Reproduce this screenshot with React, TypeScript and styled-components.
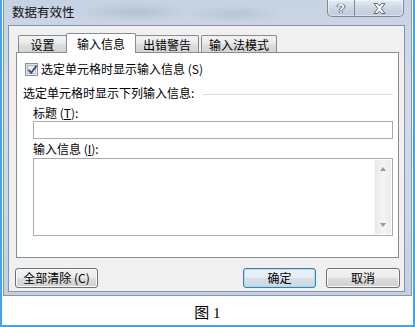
import React from "react";
import styled, { createGlobalStyle } from "styled-components";

const Global = createGlobalStyle`
  html, body { margin: 0; padding: 0; background: #fff; }
  body {
    font-family: "Noto Sans CJK SC", "Liberation Sans", sans-serif;
    font-size: 12px;
    color: #000;
  }
  * { box-sizing: border-box; }
`;

const Page = styled.div`
  width: 415px;
  height: 327px;
  border: 2px solid #4aa0ef;
  border-top: none;
  padding: 0 1px;
  background: #fff;
  display: flex;
  flex-direction: column;
`;

const Window = styled.div`
  height: 296px;
  flex: none;
  display: flex;
  flex-direction: column;
  border: 1px solid #8796aa;
  border-top: none;
  padding: 0 6px 3px 4px;
  background:
    radial-gradient(ellipse 60px 10px at 130px 12px, rgba(120, 140, 165, 0.25), transparent),
    radial-gradient(ellipse 50px 9px at 230px 14px, rgba(120, 140, 165, 0.22), transparent),
    linear-gradient(180deg, #c6d3e3 0%, #d2dce9 30%, #ccd8e7 70%, #c3d0e1 100%);
`;

const TitleBar = styled.div`
  height: 25px;
  flex: none;
  display: flex;
  align-items: flex-start;
  justify-content: space-between;
  padding-left: 4px;
`;

const TitleText = styled.span`
  font-size: 12.5px;
  line-height: 14px;
  margin-top: 5px;
  color: #111;
`;

const CaptionButtons = styled.div`
  display: flex;
  margin-right: 1px;
  height: 17px;
  border: 1px solid #7d8a9c;
  border-top: none;
  border-radius: 0 0 5px 5px;
  overflow: hidden;
  background: linear-gradient(180deg, rgba(255, 255, 255, 0.55), rgba(205, 215, 230, 0.5) 55%, rgba(185, 198, 215, 0.6));
  box-shadow: inset 0 0 0 1px rgba(255, 255, 255, 0.45);
`;

const CapBtn = styled.div<{ $w: number; $sep?: boolean }>`
  width: ${(p) => p.$w}px;
  display: flex;
  align-items: center;
  justify-content: center;
  border-right: ${(p) => (p.$sep ? "1px solid #7d8a9c" : "none")};
`;

const HelpGlyph = styled.span`
  font-family: "Liberation Sans", sans-serif;
  font-weight: bold;
  font-size: 13px;
  line-height: 13px;
  color: #fff;
  text-shadow: 0 0 1px #4b5566, 0 0 1px #4b5566, 1px 0 0 #6b7586, -1px 0 0 #6b7586;
`;

const Client = styled.div`
  flex: 1;
  display: flex;
  flex-direction: column;
  background: #f0f0f0;
  border: 1px solid #8594a8;
  padding: 7px 4px 3px 6px;
`;

const TabStrip = styled.div`
  height: 19px;
  display: flex;
  align-items: flex-end;
  padding-left: 2px;
  margin-left: 1px;
  position: relative;
  z-index: 1;
`;

const Tab = styled.div<{ $w: number; $active?: boolean; $mr?: number }>`
  width: ${(p) => p.$w}px;
  height: ${(p) => (p.$active ? 20 : 17)}px;
  margin-bottom: ${(p) => (p.$active ? -1 : 0)}px;
  margin-left: ${(p) => (p.$active ? -1 : 0)}px;
  margin-right: ${(p) => (p.$mr ?? 0)}px;
  display: flex;
  align-items: center;
  justify-content: center;
  padding-top: ${(p) => (p.$active ? 0 : 1)}px;
  border: 1px solid #898c95;
  border-bottom: none;
  border-radius: 2px 2px 0 0;
  line-height: 14px;
  background: ${(p) =>
    p.$active
      ? "#fff"
      : "linear-gradient(180deg, #f3f3f3 0%, #ebebeb 45%, #dedede 55%, #d3d3d3 100%)"};
`;

const Panel = styled.div`
  height: 206px;
  flex: none;
  margin-left: 1px;
  margin-right: 1px;
  background: #fff;
  border: 1px solid #898c95;
  display: flex;
  flex-direction: column;
  padding: 0 5px 0 6px;
`;

const CheckRow = styled.label`
  margin-top: 9px;
  padding-left: 2px;
  height: 14px;
  display: flex;
  align-items: center;
  line-height: 14px;
`;

const CheckBox = styled.span`
  width: 13px;
  height: 13px;
  flex: none;
  border: 1px solid #8e8f8f;
  background: linear-gradient(135deg, #dcdcdc, #f6f6f6);
  padding: 1px;
  display: flex;
  align-items: center;
  justify-content: center;
  margin-right: 3px;
`;

const CheckInner = styled.span`
  width: 9px;
  height: 9px;
  background: linear-gradient(135deg, #e2e2e2, #fbfbfb);
  border: 1px solid #b9b9b9;
  position: relative;
  overflow: visible;
`;

const CheckMark = styled.svg`
  position: absolute;
  left: -1px;
  top: -2px;
`;

const GroupHeader = styled.div`
  margin-top: 10px;
  height: 14px;
  line-height: 14px;
  display: flex;
  align-items: center;
`;

const GroupLine = styled.div`
  flex: 1;
  height: 1px;
  background: #dcdcdc;
  margin-left: 9px;
  margin-top: 2px;
`;

const Fields = styled.div`
  padding-left: 10px;
  display: flex;
  flex-direction: column;
`;

const FieldLabel = styled.div<{ $mt: number }>`
  margin-top: ${(p) => p.$mt}px;
  height: 14px;
  line-height: 14px;
`;

const TextBox = styled.div`
  margin-top: 1px;
  height: 18px;
  border: 1px solid #ababab;
  background: #fff;
`;

const TextArea = styled.div`
  margin-top: 2px;
  height: 78px;
  border: 1px solid #ababab;
  background: #fff;
  display: flex;
  justify-content: flex-end;
  padding: 1px;
`;

const ScrollBar = styled.div`
  width: 17px;
  display: flex;
  flex-direction: column;
  justify-content: space-between;
  align-items: center;
  padding: 7px 0;
  background: linear-gradient(90deg, #e9e9e9, #f4f4f4 50%, #ececec);
  border-left: 1px solid #f7f7f7;
`;

const Arrow = styled.span<{ $down?: boolean }>`
  width: 0;
  height: 0;
  border-left: 3.5px solid transparent;
  border-right: 3.5px solid transparent;
  ${(p) => (p.$down ? "border-top: 4px solid #9a9a9a;" : "border-bottom: 4px solid #9a9a9a;")}
`;

const ButtonRow = styled.div`
  margin-top: 10px;
  display: flex;
  align-items: center;
`;

const Button = styled.button<{ $w: number; $default?: boolean; $ml?: number }>`
  width: ${(p) => p.$w}px;
  height: 20px;
  margin-left: ${(p) => p.$ml ?? 0}px;
  padding: 0;
  font-family: inherit;
  font-size: 12px;
  line-height: 14px;
  color: #000;
  border: 1px solid ${(p) => (p.$default ? "#3c7fb1" : "#707070")};
  border-radius: 3px;
  background: ${(p) =>
    p.$default
      ? "linear-gradient(180deg, #eef4f8 0%, #e5edf3 50%, #d6e1ea 51%, #cad7e2 100%)"
      : "linear-gradient(180deg, #f2f2f2 0%, #ebebeb 50%, #dddddd 51%, #cfcfcf 100%)"};
  box-shadow: inset 0 0 0 1px ${(p) => (p.$default ? "#a8dcf2" : "#fbfbfb")};
`;

const Caption = styled.div`
  flex: 1;
  display: flex;
  justify-content: center;
  padding-top: 9px;
  font-family: "Liberation Serif", "Noto Sans CJK SC", serif;
  font-size: 15px;
  line-height: 16px;
`;

const Acc = styled.span`
  text-decoration: underline;
`;

export default function App() {
  return (
    <>
      <Global />
      <Page>
        <Window>
          <TitleBar>
            <TitleText>数据有效性</TitleText>
            <CaptionButtons>
              <CapBtn $w={27} $sep>
                <HelpGlyph>?</HelpGlyph>
              </CapBtn>
              <CapBtn $w={48}>
                <svg width="13" height="11" viewBox="0 0 13 11">
                  <path
                    d="M1 0.5 H4.5 L6.5 3 L8.5 0.5 H12 L8.3 5.5 L12 10.5 H8.5 L6.5 8 L4.5 10.5 H1 L4.7 5.5 Z"
                    fill="#fff"
                    stroke="#5d6778"
                    strokeWidth="1"
                    strokeLinejoin="round"
                  />
                </svg>
              </CapBtn>
            </CaptionButtons>
          </TitleBar>
          <Client>
            <TabStrip>
              <Tab $w={49}>设置</Tab>
              <Tab $w={70} $active $mr={-1}>
                输入信息
              </Tab>
              <Tab $w={64} $mr={2}>
                出错警告
              </Tab>
              <Tab $w={76}>输入法模式</Tab>
            </TabStrip>
            <Panel>
              <CheckRow>
                <CheckBox>
                  <CheckInner>
                    <CheckMark width="11" height="11" viewBox="0 0 11 11">
                      <path d="M1.5 5.8 L4.2 8.8 L9.6 1.6" fill="none" stroke="#2f4f96" strokeWidth="1.9" />
                    </CheckMark>
                  </CheckInner>
                </CheckBox>
                选定单元格时显示输入信息 (S)
              </CheckRow>
              <GroupHeader>
                选定单元格时显示下列输入信息:
                <GroupLine />
              </GroupHeader>
              <Fields>
                <FieldLabel $mt={6}>
                  标题 (<Acc>T</Acc>):
                </FieldLabel>
                <TextBox />
                <FieldLabel $mt={3}>
                  输入信息 (<Acc>I</Acc>):
                </FieldLabel>
                <TextArea>
                  <ScrollBar>
                    <Arrow />
                    <Arrow $down />
                  </ScrollBar>
                </TextArea>
              </Fields>
            </Panel>
            <ButtonRow>
              <Button $w={83}>全部清除 (C)</Button>
              <Button $w={73} $default $ml={145}>
                确定
              </Button>
              <Button $w={74} $ml={10}>
                取消
              </Button>
            </ButtonRow>
          </Client>
        </Window>
        <Caption>图 1</Caption>
      </Page>
    </>
  );
}
